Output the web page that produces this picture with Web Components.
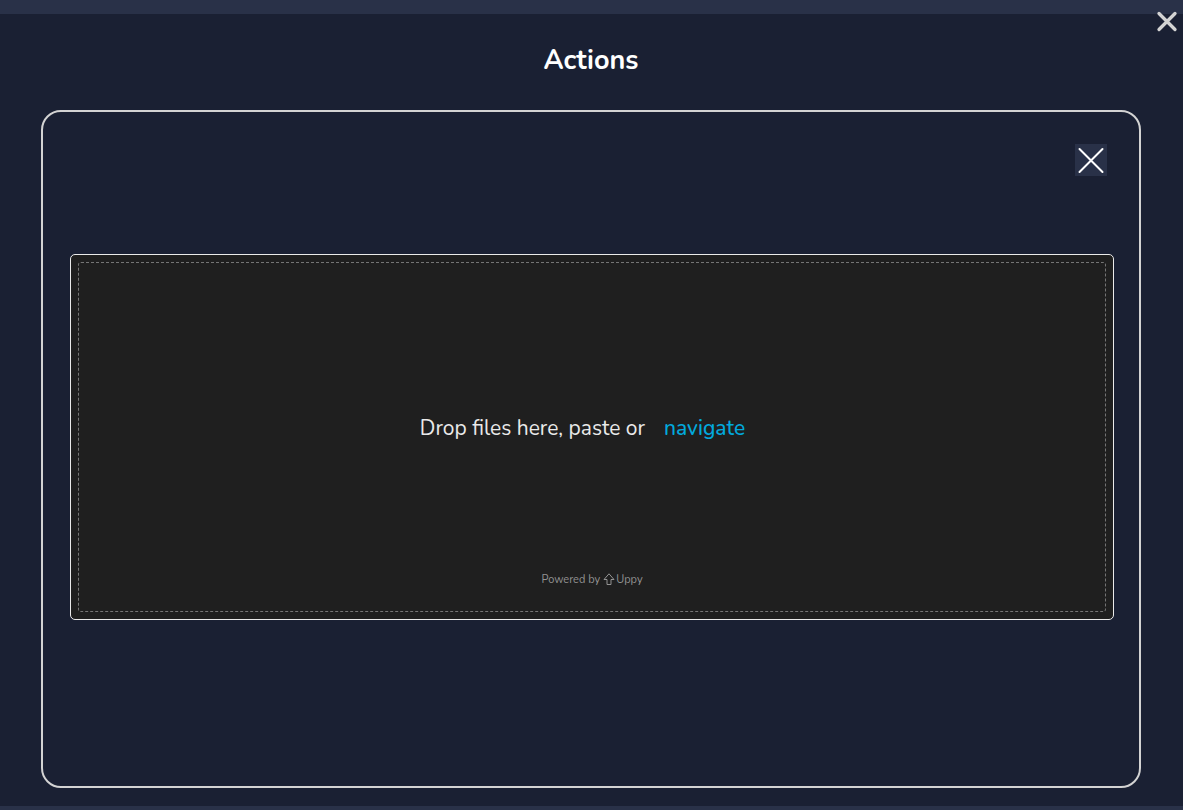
<!DOCTYPE html>
<html lang="en">
<head>
<meta charset="utf-8">
<meta name="viewport" content="width=device-width, initial-scale=1">
<title>Actions</title>
<style>
html, body { margin: 0; min-height: 100%; background: #293148; }
body { font-family: Nunito, Lato, "Noto Sans", sans-serif; color: #fff; }
</style>
</head>
<body>
<modal-dialog heading="Actions">
  <action-panel>
    <file-drop></file-drop>
  </action-panel>
</modal-dialog>
<script>
class ModalDialog extends HTMLElement {
  constructor() {
    super();
    this.attachShadow({ mode: "open" }).innerHTML = `
      <style>
        :host { display: flex; min-height: 100vh; box-sizing: border-box; padding: 14px 0 4px; }
        section { position: relative; flex: 1; display: flex; flex-direction: column; background: #1a2033; padding: 28px 42px 18px 41px; }
        h1 { margin: 0 0 30px; font: 700 27px/38px Nunito, Lato, "Noto Sans", sans-serif; text-align: center; }
        button { position: absolute; top: -6px; right: 4px; width: 24px; height: 26px; padding: 0; border: 0; background: none; color: #d3d3d3; }
        svg { display: block; width: 24px; height: 26px; }
        ::slotted(*) { flex: 1; }
      </style>
      <section role="dialog" aria-labelledby="title">
        <button type="button" aria-label="Close dialog">
          <svg viewBox="0 0 24 26" fill="none" stroke="currentColor" stroke-width="3.300" stroke-linecap="round"><path d="M4 5.500 20 21.500M20 5.500 4 21.500"/></svg>
        </button>
        <h1 id="title"></h1>
        <slot></slot>
      </section>`;
    this.shadowRoot.querySelector("h1").textContent = this.getAttribute("heading");
  }
}
class ActionPanel extends HTMLElement {
  constructor() {
    super();
    this.attachShadow({ mode: "open" }).innerHTML = `
      <style>
        :host { display: flex; flex-direction: column; box-sizing: border-box; border: 2px solid #d3d3d3; border-radius: 20px; padding: 32px 25px 32px 27px; }
        button { align-self: flex-end; width: 32px; height: 32px; margin: 0 7px 78px 0; padding: 0; border: 0; background: #293148; color: #fff; }
        svg { display: block; width: 32px; height: 32px; }
      </style>
      <button type="button" aria-label="Close uploader">
        <svg viewBox="0 0 32 32" fill="none" stroke="currentColor" stroke-width="2" stroke-linecap="round"><path d="M4.500 5 27.500 28M27.500 5 4.500 28"/></svg>
      </button>
      <slot></slot>`;
  }
}
class FileDrop extends HTMLElement {
  constructor() {
    super();
    this.attachShadow({ mode: "open" }).innerHTML = `
      <style>
        :host { display: flex; box-sizing: border-box; min-height: 366px; padding: 7px; border: 1px solid #eaeaea; border-radius: 5px; background: #1f1f1f; }
        .area { flex: 1; display: grid; grid-template-rows: 1fr auto; border: 1px dashed #757575; border-radius: 3px; padding: 20px 0 23px; }
        .prompt { display: flex; align-items: center; justify-content: center; gap: 19px; padding-right: 19px; font-size: 21px; line-height: 32px; color: #eaeaea; }
        button { padding: 0; border: 0; background: none; font: inherit; font-weight: 500; color: #02a9dd; cursor: pointer; }
        a { justify-self: center; display: flex; align-items: center; font-size: 11px; line-height: 16px; color: #939393; text-decoration: none; }
        svg { width: 12px; height: 12px; margin: 0 1px 2px 3px; }
      </style>
      <div class="area">
        <div class="prompt"><span>Drop files here, paste or</span><button type="button">navigate</button></div>
        <a href="https://uppy.io"><span>Powered by</span><svg viewBox="0 0 12 12" fill="none" stroke="currentColor" aria-hidden="true"><path d="M6 .8 11 6.500H8v5H4v-5H1Z"/></svg><span>Uppy</span></a>
      </div>`;
  }
}
customElements.define("modal-dialog", ModalDialog);
customElements.define("action-panel", ActionPanel);
customElements.define("file-drop", FileDrop);
</script>
</body>
</html>
